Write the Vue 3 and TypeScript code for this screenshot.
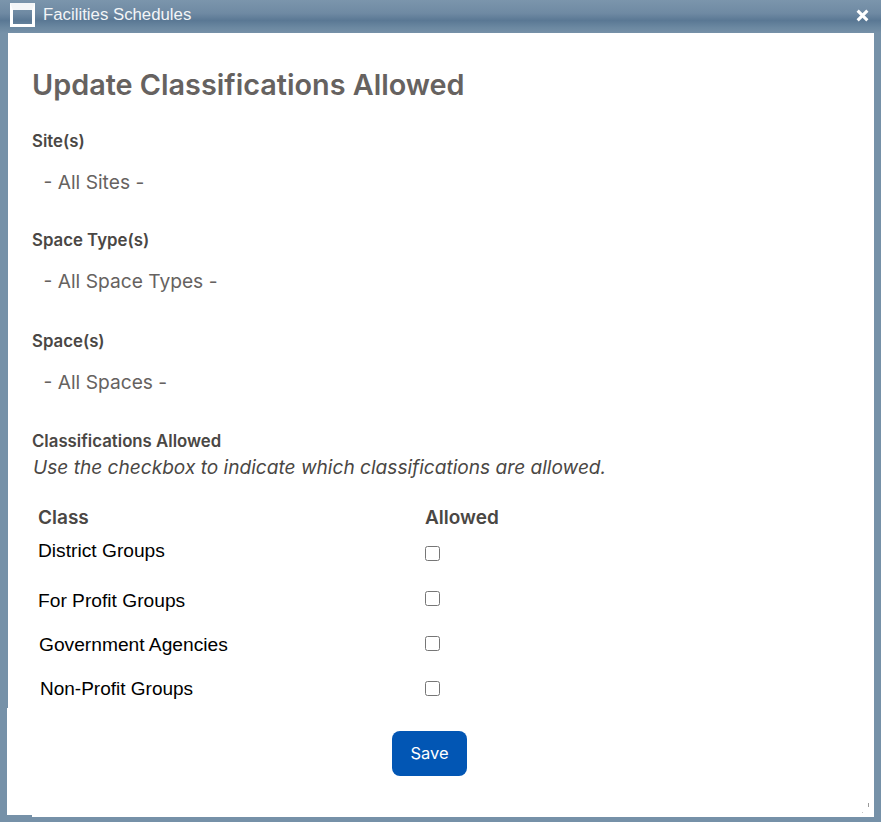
<script setup lang="ts">
const sections = [
  { label: 'Site(s)', value: '- All Sites -' },
  { label: 'Space Type(s)', value: '- All Space Types -' },
  { label: 'Space(s)', value: '- All Spaces -' },
]
const rows = [
  { name: 'District Groups', cls: 'r1' },
  { name: 'For Profit Groups', cls: 'r2' },
  { name: 'Government Agencies', cls: 'r3' },
  { name: 'Non-Profit Groups', cls: 'r4' },
]
</script>

<template>
  <div class="window">
    <header class="titlebar">
      <span class="win-icon"></span>
      <span class="win-title">Facilities Schedules</span>
      <svg class="close" viewBox="0 0 12 12" width="13" height="13" aria-label="Close">
        <path d="M1.5 1.5 L10.5 10.5 M10.5 1.5 L1.5 10.5" stroke="#fff" stroke-width="2.8" fill="none" />
      </svg>
    </header>
    <main class="content">
      <h1>Update Classifications Allowed</h1>
      <section v-for="s in sections" :key="s.label" class="field">
        <div class="label">{{ s.label }}</div>
        <div class="value">{{ s.value }}</div>
      </section>
      <div class="label allowed-label">Classifications Allowed</div>
      <p class="hint">Use the checkbox to indicate which classifications are allowed.</p>
      <div class="grid-head">
        <span>Class</span>
        <span>Allowed</span>
      </div>
      <div v-for="r in rows" :key="r.name" class="row" :class="r.cls">
        <span class="name">{{ r.name }}</span>
        <input type="checkbox" />
      </div>
      <div class="actions">
        <button type="button" class="save">Save</button>
      </div>
      <span class="speck speck-a"></span>
      <span class="speck speck-b"></span>
    </main>
  </div>
</template>

<style>
html, body { margin: 0; background: #7691a8; }
</style>

<style scoped>
.window {
  width: 881px;
  height: 822px;
  box-sizing: border-box;
  background: #7691a8;
  display: flex;
  flex-direction: column;
  padding-bottom: 5px;
  overflow: hidden;
}
.titlebar {
  height: 33px;
  flex: none;
  display: flex;
  align-items: center;
  box-sizing: border-box;
  padding: 0 12px 3px 10px;
  background: linear-gradient(to bottom, #7b95ac 0%, #6f8aa3 40%, #5a7894 62%, #6a87a0 82%, #7691a8 100%);
}
.win-icon {
  width: 25px;
  height: 24px;
  box-sizing: border-box;
  border: 3px solid #fff;
  border-top-width: 7px;
  border-top-color: #f4f6f8;
  flex: none;
}
.win-title {
  margin-left: 8px;
  font: 16.8px "Liberation Sans", Arial, sans-serif;
  color: #fff;
  opacity: 0.92;
  flex: 1;
}
.close { flex: none; margin-top: 1px; }
.content {
  flex: 1;
  position: relative;
  margin: 0 7px 0 8px;
  background: #fff;
  padding: 35px 24px 0 24px;
  box-sizing: border-box;
  font-family: Inter, "Liberation Sans", sans-serif;
}
.content::before {
  content: "";
  position: absolute;
  left: -1px;
  top: 675px;
  bottom: 2px;
  width: 1px;
  background: #fff;
}
.content::after {
  content: "";
  position: absolute;
  left: 0;
  bottom: 0;
  width: 24px;
  height: 2px;
  background: #7691a8;
}
.speck { position: absolute; background: #9a9a9a; }
.speck-a { left: 860px; top: 770px; width: 1px; height: 4px; }
.speck-b { left: 854px; top: 779px; width: 1px; height: 1px; background: #c4c4c4; }
h1 {
  margin: 0;
  font: 600 28.8px/34px Inter, "Liberation Sans", sans-serif;
  color: #666260;
}
.field { height: 100px; }
.field:first-of-type { margin-top: 29px; height: 99px; }
.field:nth-of-type(2) { height: 101px; }
.label {
  font: 600 16.8px/20px Inter, "Liberation Sans", sans-serif;
  color: #4a4744;
}
.value {
  margin: 19px 0 0 11.5px;
  font: 400 19.2px/24px Inter, "Liberation Sans", sans-serif;
  color: #666260;
}
.hint {
  margin: 4px 0 0 1px;
  font: italic 400 19.1px/24px Inter, "Liberation Sans", sans-serif;
  color: #4a4744;
}
.grid-head {
  display: grid;
  grid-template-columns: 387px 1fr;
  margin: 27px 0 0 6px;
  font: 600 19px/24px Inter, "Liberation Sans", sans-serif;
  color: #4a4744;
}
.row {
  display: grid;
  grid-template-columns: 387px 1fr;
  height: 45px;
  margin-left: 6px;
  font: 19.2px/24px "Liberation Sans", Arial, sans-serif;
  color: #000;
}
.row input {
  width: 15px;
  height: 15px;
  margin: 0;
  align-self: center;
}
.row .name { align-self: center; }
.r1 { height: 46px; }
.r1 .name { transform: translateY(-2px); }
.r2 .name { transform: translateY(2px); }
.r3 .name { margin-left: 1px; transform: translateY(1px); }
.r4 .name { margin-left: 2px; font-size: 19px; }
.actions {
  display: flex;
  justify-content: center;
  margin-top: 20px;
  padding-right: 23px;
}
.save {
  width: 75px;
  height: 45px;
  border: none;
  border-radius: 8px;
  background: #0256b4;
  color: #fff;
  font: 400 16.5px Inter, "Liberation Sans", sans-serif;
  padding: 0 0 2px;
}
</style>
